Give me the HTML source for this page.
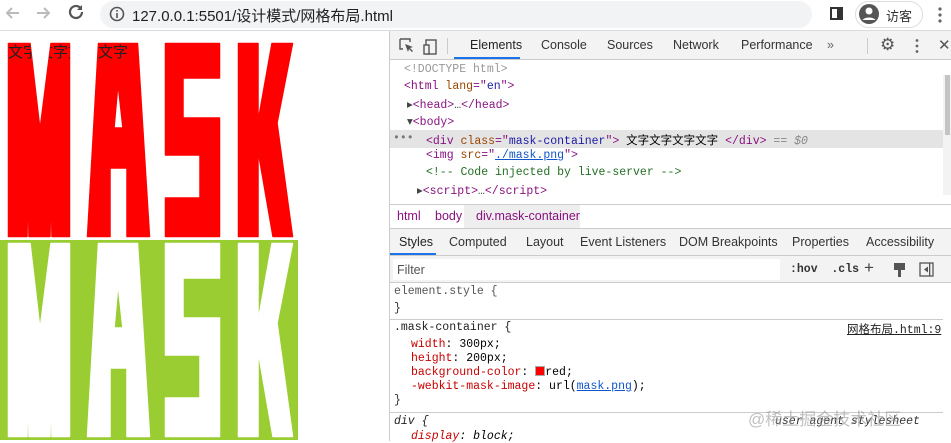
<!DOCTYPE html>
<html><head><meta charset="utf-8"><style>
*{margin:0;padding:0;box-sizing:border-box}
body{width:951px;height:441px;overflow:hidden;background:#fff;font-family:"Liberation Sans","Noto Sans CJK SC",sans-serif;position:relative}
.abs{position:absolute}
.mono{font-family:"Liberation Mono","Noto Sans CJK SC",monospace;font-size:11.5px;white-space:pre}
.tag{color:#881280}.an{color:#994500}.av{color:#1a1aa6}
.pr{color:#c80000}
.tab{position:absolute;font-size:12.5px;color:#333;top:38px}
.st{position:absolute;font-size:12.5px;color:#333;top:235px}
</style></head><body>
<div class="abs" style="left:0;top:0;width:951px;height:31px;background:#fff;border-bottom:1px solid #dadce0"></div>
<svg class="abs" style="left:0;top:0" width="100" height="31" viewBox="0 0 100 31">
<path d="M19 13H8M12 8l-5 5 5 5" stroke="#bbb" stroke-width="2" fill="none"/>
<path d="M37 13h11M44 8l5 5-5 5" stroke="#bbb" stroke-width="2" fill="none"/>
<path d="M82 12a6 6 0 1 1-2-4.5" stroke="#555" stroke-width="2.2" fill="none"/><path d="M82 5v5h-5z" fill="#555"/>
</svg>
<div class="abs" style="left:100px;top:1px;width:712px;height:27px;background:#f1f3f4;border-radius:14px"></div>
<svg class="abs" style="left:109px;top:6px" width="16" height="16"><circle cx="8" cy="8" r="6.5" stroke="#555" stroke-width="1.6" fill="none"/><rect x="7.2" y="7" width="1.6" height="5" fill="#555"/><rect x="7.2" y="4" width="1.6" height="1.6" fill="#555"/></svg>
<div class="abs" style="left:132px;top:5px;font-size:15px;color:#202124">127.0.0.1:5501/设计模式/网格布局.html</div>
<div class="abs" style="left:830px;top:7px;width:13px;height:13px;border:2px solid #333;border-right-width:6px"></div>
<div class="abs" style="left:855px;top:1px;width:68px;height:27px;border:1px solid #ddd;border-radius:14px"></div>
<svg class="abs" style="left:858px;top:3px" width="22" height="22"><circle cx="11" cy="11" r="10" fill="#555"/><circle cx="11" cy="8" r="3.5" fill="#fff"/><path d="M4.5 17a7.5 5 0 0 1 13 0" fill="#fff"/></svg>
<div class="abs" style="left:886px;top:6px;font-size:13px;color:#333">访客</div>
<svg class="abs" style="left:937px;top:6px" width="6" height="18"><circle cx="3" cy="3" r="1.6" fill="#666"/><circle cx="3" cy="9" r="1.6" fill="#666"/><circle cx="3" cy="15" r="1.6" fill="#666"/></svg>

<svg class="abs" style="left:0;top:31px" width="389" height="410" viewBox="0 31 389 410">
<defs>
<clipPath id="cp"><path d="M8 43H30L40 130L51 43H70V237H8Z M87 237L98 43H138L150 237H127V168H110V237Z M165 43H220V78H183V118H220V237H165V198H200V155H165Z M238 43H258V122L272 43H293L277 123L293 237H273L258 150V237H238Z"/></clipPath>
</defs>
<g fill="#f00" stroke="#f00" stroke-width="1.5" stroke-linejoin="round">
<path d="M8.5 43.5H30L40 130L51 43.5H69.5V236.5H52L51 175L50 236.5H29L28 175L27 236.5H8.5Z"/>
<path d="M87.5 236.5L98.5 43.5H137.5L149.5 236.5H127V168H110V236.5Z M118 83L114 128H123Z" fill-rule="evenodd"/>
<path d="M165.5 43.5H219.5V78H183V118H219.5V236.5H165.5V198H200V155H165.5Z"/>
<path d="M238.5 43.5H258V122L272 43.5H292.5L277 123L292.5 236.5H273L258 150V236.5H238.5Z"/>
</g>
<g clip-path="url(#cp)"><text x="8" y="57" font-size="15" fill="#222" font-family="Liberation Sans,Noto Sans CJK SC,sans-serif">文字文字文字文字</text></g>
<rect x="0" y="240" width="298" height="200" fill="#9acd32"/>
<g fill="#fff" stroke="#fff" stroke-width="1.5" stroke-linejoin="round" transform="translate(0,200)">
<path d="M8.5 43.5H30L40 130L51 43.5H69.5V236.5H52L51 175L50 236.5H29L28 175L27 236.5H8.5Z"/>
<path d="M87.5 236.5L98.5 43.5H137.5L149.5 236.5H127V168H110V236.5Z M118 83L114 128H123Z" fill-rule="evenodd"/>
<path d="M165.5 43.5H219.5V78H183V118H219.5V236.5H165.5V198H200V155H165.5Z"/>
<path d="M238.5 43.5H258V122L272 43.5H292.5L277 123L292.5 236.5H273L258 150V236.5H238.5Z"/>
</g>
</svg>

<div class="abs" style="left:389px;top:31px;width:1px;height:410px;background:#ccc"></div>
<div class="abs" style="left:390px;top:31px;width:561px;height:29px;background:#f3f3f3;border-bottom:1px solid #ccc"></div>
<svg class="abs" style="left:398px;top:37px" width="40" height="18"><path d="M2 2h10v3M2 2v10h3" stroke="#555" stroke-width="1.4" fill="none"/><path d="M7 7l8 3-3 1 3 3-1 1-3-3-1 3z" fill="#555"/><rect x="28" y="3" width="10" height="14" stroke="#555" stroke-width="1.4" fill="none"/><rect x="26" y="8" width="5" height="9" fill="#f3f3f3" stroke="#555" stroke-width="1.4"/></svg>
<div class="abs" style="left:447px;top:38px;width:1px;height:16px;background:#ccc"></div>
<div class="tab" style="left:470px;color:#222">Elements</div>
<div class="abs" style="left:454px;top:57px;width:66px;height:2px;background:#1a73e8"></div>
<div class="tab" style="left:541px">Console</div>
<div class="tab" style="left:607px">Sources</div>
<div class="tab" style="left:673px">Network</div>
<div class="tab" style="left:741px">Performance</div>
<div class="tab" style="left:827px;color:#666">»</div>
<div class="abs" style="left:867px;top:38px;width:1px;height:16px;background:#ccc"></div>
<div class="abs" style="left:880px;top:35px;font-size:17px;color:#555">⚙</div>
<svg class="abs" style="left:914px;top:38px" width="6" height="16"><circle cx="3" cy="2.5" r="1.4" fill="#666"/><circle cx="3" cy="8" r="1.4" fill="#666"/><circle cx="3" cy="13.5" r="1.4" fill="#666"/></svg>
<div class="abs" style="left:938px;top:36px;font-size:15px;color:#555">✕</div>

<div class="abs mono" style="left:404px;top:63px;color:#999">&lt;!DOCTYPE html&gt;</div>
<div class="abs mono" style="left:404px;top:80px"><span class="tag">&lt;html </span><span class="an">lang</span><span class="tag">="</span><span class="av">en</span><span class="tag">"&gt;</span></div>
<div class="abs mono" style="left:407px;top:97px;color:#444">▸<span class="tag">&lt;head&gt;</span>…<span class="tag">&lt;/head&gt;</span></div>
<div class="abs mono" style="left:407px;top:114px;color:#444">▾<span class="tag">&lt;body&gt;</span></div>
<div class="abs" style="left:390px;top:130px;width:553px;height:18px;background:#e4e4e4"></div>
<div class="abs mono" style="left:393px;top:132px;color:#777">•••</div>
<div class="abs mono" style="left:426px;top:132px"><span class="tag">&lt;div </span><span class="an">class</span><span class="tag">="</span><span class="av">mask-container</span><span class="tag">"&gt;</span> 文字文字文字文字 <span class="tag">&lt;/div&gt;</span> <span style="color:#888">== <i>$0</i></span></div>
<div class="abs mono" style="left:426px;top:149px"><span class="tag">&lt;img </span><span class="an">src</span><span class="tag">="</span><span style="color:#1155cc;text-decoration:underline">./mask.png</span><span class="tag">"&gt;</span></div>
<div class="abs mono" style="left:426px;top:166px;color:#236e25">&lt;!-- Code injected by live-server --&gt;</div>
<div class="abs mono" style="left:417px;top:183px;color:#444">▸<span class="tag">&lt;script&gt;</span>…<span class="tag">&lt;/script&gt;</span></div>
<div class="abs" style="left:943px;top:75px;width:8px;height:120px;background:#f3f3f3"></div>
<div class="abs" style="left:945px;top:75px;width:5px;height:60px;background:#c4c4c4"></div>

<div class="abs" style="left:390px;top:204px;width:561px;height:25px;border-top:1px solid #ccc;border-bottom:1px solid #ccc;background:#fff"></div>
<div class="abs" style="left:464px;top:205px;width:116px;height:23px;background:#eee"></div>
<div class="abs" style="left:397px;top:209px;font-size:12.5px;color:#881280">html</div>
<div class="abs" style="left:435px;top:209px;font-size:12.5px;color:#881280">body</div>
<div class="abs" style="left:476px;top:209px;font-size:12.5px;color:#881280">div.mask-container</div>

<div class="abs" style="left:390px;top:229px;width:561px;height:27px;background:#f3f3f3;border-bottom:1px solid #ccc"></div>
<div class="st" style="left:399px;color:#222">Styles</div>
<div class="abs" style="left:390px;top:253px;width:46px;height:2px;background:#1a73e8"></div>
<div class="st" style="left:449px">Computed</div>
<div class="st" style="left:526px">Layout</div>
<div class="st" style="left:580px">Event Listeners</div>
<div class="st" style="left:679px">DOM Breakpoints</div>
<div class="st" style="left:792px">Properties</div>
<div class="st" style="left:866px">Accessibility</div>

<div class="abs" style="left:390px;top:256px;width:561px;height:27px;background:#f3f3f3;border-bottom:1px solid #ccc"></div>
<div class="abs" style="left:393px;top:259px;width:387px;height:21px;background:#fff"></div>
<div class="abs" style="left:397px;top:263px;font-size:12.5px;color:#555">Filter</div>
<div class="abs mono" style="left:790px;top:263px;color:#333;font-weight:bold">:hov  .cls</div>
<div class="abs" style="left:864px;top:258px;font-size:17px;color:#444">+</div>
<svg class="abs" style="left:893px;top:262px" width="14" height="16"><rect x="1" y="1" width="11" height="7" fill="#555"/><rect x="5" y="8" width="3" height="7" fill="#555"/></svg>
<svg class="abs" style="left:919px;top:262px" width="16" height="16"><rect x="1" y="1" width="13" height="13" fill="none" stroke="#555" stroke-width="1.3"/><path d="M5 7.5l4-3v6z" fill="#555"/><rect x="10" y="1" width="1.3" height="13" fill="#555"/></svg>

<div class="abs mono" style="left:394px;top:285px;color:#555">element.style {</div>
<div class="abs mono" style="left:394px;top:302px;color:#333">}</div>
<div class="abs" style="left:390px;top:319px;width:553px;height:1px;background:#ccc"></div>
<div class="abs mono" style="left:394px;top:321px;color:#222">.mask-container {</div>
<div class="abs" style="left:847px;top:321px;font-size:11.5px;white-space:pre;text-decoration:underline;color:#222;font-family:'Liberation Mono','Noto Sans CJK SC',monospace">网格布局.html:9</div>
<div class="abs mono" style="left:411px;top:338px"><span class="pr">width</span>: 300px;</div>
<div class="abs mono" style="left:411px;top:352px"><span class="pr">height</span>: 200px;</div>
<div class="abs mono" style="left:411px;top:366px"><span class="pr">background-color</span>: <span style="display:inline-block;width:10px;height:10px;background:#f00;vertical-align:-1px;border:1px solid #aaa"></span>red;</div>
<div class="abs mono" style="left:411px;top:380px"><span class="pr">-webkit-mask-image</span>: url(<span style="color:#1155cc;text-decoration:underline">mask.png</span>);</div>
<div class="abs mono" style="left:394px;top:394px;color:#333">}</div>
<div class="abs" style="left:390px;top:412px;width:553px;height:1px;background:#ccc"></div>
<div class="abs mono" style="left:394px;top:415px;color:#222;font-style:italic">div {</div>
<div class="abs mono" style="left:411px;top:430px;font-style:italic"><span class="pr">display</span>: block;</div>
<div class="abs mono" style="left:775px;top:415px;color:#333;font-style:italic">user agent stylesheet</div>
<div class="abs" style="left:748px;top:405px;font-size:17px;color:rgba(150,150,150,0.6)">@稀土掘金技术社区</div>
</body></html>
